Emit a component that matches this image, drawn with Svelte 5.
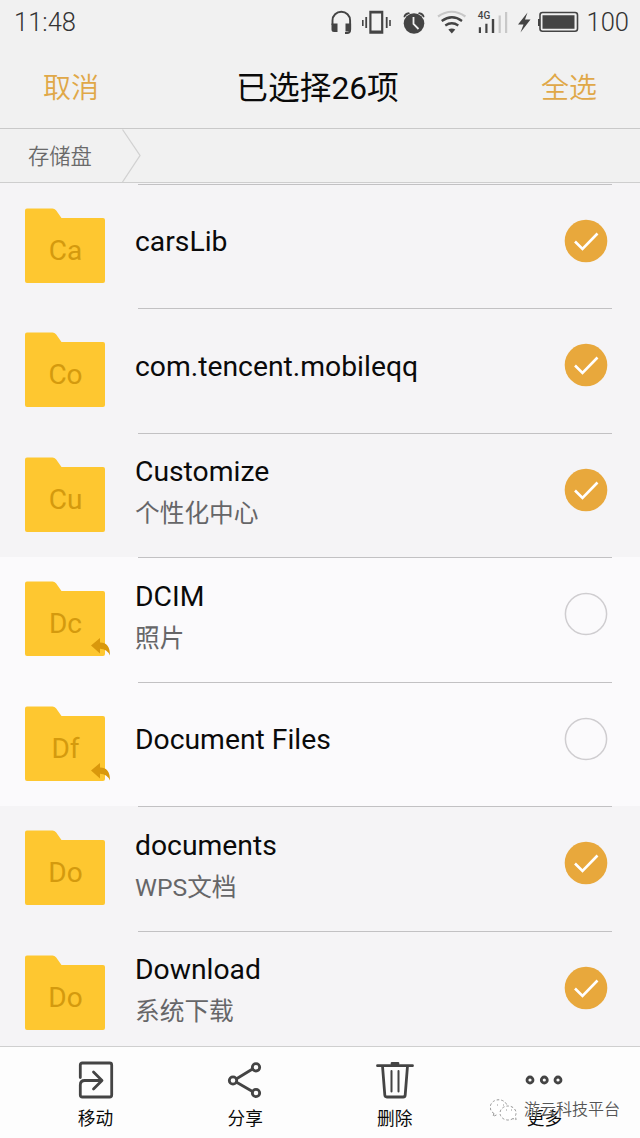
<script lang="ts">
	type Folder = { abbr: string; name: string; note?: string; selected: boolean; linked?: boolean };

	let folders = $state<Folder[]>([
		{ abbr: 'Ca', name: 'carsLib', selected: true },
		{ abbr: 'Co', name: 'com.tencent.mobileqq', selected: true },
		{ abbr: 'Cu', name: 'Customize', note: '个性化中心', selected: true },
		{ abbr: 'Dc', name: 'DCIM', note: '照片', selected: false, linked: true },
		{ abbr: 'Df', name: 'Document Files', selected: false, linked: true },
		{ abbr: 'Do', name: 'documents', note: 'WPS文档', selected: true },
		{ abbr: 'Do', name: 'Download', note: '系统下载', selected: true }
	]);

	// selected folders outside the visible part of the list
	let hiddenSelected = $state(21);
	let total = $derived(hiddenSelected + folders.filter((f) => f.selected).length);

	function setAll(value: boolean) {
		for (const folder of folders) folder.selected = value;
		if (!value) hiddenSelected = 0;
	}
</script>

<div class="screen">
	<div class="status">
		<span class="time">11:48</span>
		<svg class="indicators" width="262" height="30" viewBox="330 7 262 30">
			<path d="M332.500 25v-4.500a8.800 8.800 0 0 1 17.600 0V30q0 3-3 3H345" fill="none" stroke="#444" stroke-width="1.900" />
			<g fill="#444">
				<path d="M331.500 23.500h6v8.500h-3.500a2.500 2.500 0 0 1-2.500-2.500zM345.500 23.500h5.600v6a2 2 0 0 1-2 2h-3.600z" />
				<path d="M369.300 10.700h14v23h-14zM371.500 13.500v17h9.600v-17z" fill-rule="evenodd" />
				<path d="M365.300 17h1.800v11h-1.800zM362 20h1.600v6H362zM385.800 17h1.800v11h-1.800zM389.200 20h1.600v6h-1.600z" />
				<circle cx="414" cy="23.500" r="10.300" />
				<path d="M403.500 17q.3-4 5.500-4.700l1 1.200q-3.500 1-5.500 4zM424.500 17q-.3-4-5.500-4.700l-1 1.200q3.500 1 5.500 4z" />
				<path d="M448.300 29.500q3.500-2 7 0l-3.500 4z" />
				<path d="M478.800 27.300h2.200V33h-2.200zM485.300 23.700h2.200V33h-2.200zM491.800 19h2.400v14h-2.400z" />
				<path d="M527.500 12.500L518 24.500h5.500L520.500 32.500 530.500 19.500h-5.500z" />
				<path d="M542.500 15.300h32v13.500h-32zM538 19h2v7h-2z" />
			</g>
			<path d="M413.500 17v7l5 5" fill="none" stroke="#f1f1f1" stroke-width="1.800" />
			<path d="M438 16.500q13.700-9.500 27.400 0" fill="none" stroke="#c8c8c8" stroke-width="2.200" />
			<path d="M441.700 21q10.200-7.500 20.300 0M445.300 25.500q6.500-4.500 13 0" fill="none" stroke="#444" stroke-width="2.300" />
			<path d="M498.600 15.500h2.200V33h-2.200zM505 12h2.200v21H505z" fill="#c8c8c8" />
			<rect x="540" y="12.500" width="37.500" height="18.800" rx="2.500" fill="none" stroke="#444" stroke-width="1.600" />
			<text x="477.800" y="19" class="network">4G</text>
		</svg>
		<span class="battery">100</span>
	</div>

	<header>
		<button type="button" onclick={() => setAll(false)}>取消</button>
		<h1>已选择{total}项</h1>
		<button type="button" onclick={() => setAll(true)}>全选</button>
	</header>

	<nav>
		<span>存储盘</span>
		<svg width="20" height="53" viewBox="0 0 20 53" fill="none" stroke="#d2d2d2" stroke-width="1.300">
			<path d="M1.500 0.500L19 26.500 1.500 53" />
		</svg>
	</nav>

	<main>
		{#each folders as folder, i (i)}
			<div class="row" class:selected={folder.selected}>
				<div class="divider"></div>
				<div class="item">
					<div class="folder">
						<svg width="88" height="76" viewBox="0 0 88 76">
							<path d="M2 0.500h25.500q2 0 3.500 1.800l5.500 7.700H78q2 0 2 2V73q0 2-2 2H2q-2 0-2-2V2.500q0-2 2-2z" fill="#fec730" />
							<text x="40.500" y="51.500" text-anchor="middle">{folder.abbr}</text>
							{#if folder.linked}
								<path d="M66 64.500l9-7.500v4.500q10 0 10 13-3-6.500-10-6.700v4.700z" fill="#d9980c" />
							{/if}
						</svg>
					</div>
					<div class="label">
						<div class="name">{folder.name}</div>
						{#if folder.note}
							<div class="note">{folder.note}</div>
						{/if}
					</div>
					<button
						type="button"
						class="check"
						aria-label={folder.name}
						onclick={() => (folder.selected = !folder.selected)}
					>
						<svg width="44" height="44" viewBox="0 0 44 44" fill="none">
							{#if folder.selected}
								<circle cx="22" cy="22" r="21.300" fill="#e8a83c" />
								<path d="M11 22.500l7.500 7.500L33.500 14.500" stroke="#fff" stroke-width="2.600" />
							{:else}
								<circle cx="22" cy="22" r="20.600" stroke="#cfcdd0" stroke-width="1.500" />
							{/if}
						</svg>
					</button>
				</div>
			</div>
		{/each}
	</main>

	<footer>
		<button type="button">
			<svg width="40" height="40" viewBox="0 0 40 40">
				<path d="M4.300 17.500V5q0-2 2-2h27.400q2 0 2 2v30q0 2-2 2H6.300q-2 0-2-2V25q0-4.500 4.500-4.500H25.500M17.500 12l8.500 8.500-8.500 8.500" />
			</svg>
			<span>移动</span>
		</button>
		<button type="button">
			<svg width="40" height="40" viewBox="0 0 40 40">
				<path d="M12 18.500l15.500-9.500M12 22.500l15.500 9" />
				<circle cx="8" cy="20.500" r="3.700" />
				<circle cx="31" cy="7.300" r="3.700" />
				<circle cx="31" cy="33" r="3.700" />
			</svg>
			<span>分享</span>
		</button>
		<button type="button">
			<svg width="40" height="40" viewBox="0 0 40 40">
				<path d="M2.500 5.700h35M17 3.500h6M7.500 6l2.300 29q.2 2 2 2h16.400q1.800 0 2-2l2.300-29" />
				<path d="M16.500 11v20.500M23.500 11v20.500" stroke-width="2" />
			</svg>
			<span>删除</span>
		</button>
		<button type="button">
			<svg width="40" height="40" viewBox="0 0 40 40">
				<circle cx="6" cy="20" r="3" />
				<circle cx="20.300" cy="20" r="3" />
				<circle cx="34" cy="20" r="3" />
			</svg>
			<span>更多</span>
		</button>
		<div class="watermark">
			<svg width="28" height="24" viewBox="0 0 28 24" fill="#fff" stroke="#888" stroke-width="0.900" stroke-dasharray="2.500 2">
				<path d="M4 15.500A8.500 7.500 0 1 1 17 7.500M4 15.500l-1 3 4-1.800" />
				<path d="M23 20.500a8 7 0 1 1 2.500-3l.5 4.500z" />
				<path d="M7 7h1M13 7h1M16 12h1M21 12h1" />
			</svg>
			<span>游云科技平台</span>
		</div>
	</footer>
</div>

<style>
	:global(body) {
		margin: 0;
	}

	.screen {
		display: flex;
		flex-direction: column;
		width: 640px;
		height: 1138px;
		overflow: hidden;
		background: #f1f1f1;
		font-family: Roboto, 'Noto Sans CJK SC', sans-serif;
		color: #0a0a0a;
	}

	button {
		border: 0;
		padding: 0;
		background: none;
		font: inherit;
		color: inherit;
	}

	.status {
		display: flex;
		align-items: center;
		justify-content: space-between;
		height: 44px;
		padding: 0 11px 1px 14px;
		font-size: 25.500px;
		font-weight: 330;
		color: #333;
	}

	.indicators {
		margin-left: auto;
		margin-right: -5px;
	}

	.network {
		font: 500 10px Roboto, sans-serif;
		fill: #444;
	}

	header {
		display: flex;
		align-items: center;
		justify-content: space-between;
		height: 83px;
		padding: 0 43px;
		border-bottom: 1px solid #c9c9c9;
	}

	header button {
		margin-top: -2px;
		font-size: 28px;
		font-weight: 350;
		color: #e0a848;
	}

	h1 {
		margin: -4px 0 0;
		padding-right: 5px;
		font-size: 31.700px;
		font-weight: 370;
	}

	nav {
		display: flex;
		align-items: center;
		height: 53px;
		padding-left: 28px;
		border-bottom: 1px solid #cecece;
		font-size: 21.300px;
		font-weight: 350;
		color: #6a6a6a;
	}

	nav span {
		margin-top: -2px;
	}

	nav svg {
		margin-left: 29px;
	}

	main {
		flex: 1;
		min-height: 0;
		overflow: hidden;
		padding-top: 0.800px;
		background: #f5f4f6;
	}

	.row {
		height: 124.500px;
		background: #fbfafc;
	}

	.selected {
		background: #f5f4f6;
	}

	.divider {
		height: 1px;
		margin: 0 28px 0 138px;
		background: #c2c1c3;
	}

	.item {
		display: flex;
		height: 114px;
		padding: 0 32px 0 25px;
		align-items: center;
	}

	.folder {
		width: 110px;
		padding-top: 8px;
	}

	.folder svg,
	.check svg {
		display: block;
	}

	.check {
		margin-top: -2px;
	}

	.folder text {
		font-size: 28px;
		font-weight: 370;
		fill: #d49a0e;
	}

	.label {
		flex: 1;
		padding-top: 1px;
	}

	.name {
		font-size: 28.300px;
		font-weight: 370;
		line-height: 40px;
	}

	.note {
		padding-top: 1px;
		margin-bottom: -5px;
		font-size: 24.700px;
		font-weight: 370;
		line-height: 42px;
		color: #666668;
	}

	footer {
		position: relative;
		display: flex;
		justify-content: space-between;
		height: 91px;
		padding: 0 75px 0 75px;
		border-top: 1px solid #cfcfcf;
		background: #fdfdfd;
	}

	footer button {
		display: flex;
		flex-direction: column;
		align-items: center;
		width: 41px;
		padding-top: 12.500px;
		font-size: 17.700px;
		line-height: 26px;
		white-space: nowrap;
	}

	footer button svg {
		fill: none;
		stroke: #444;
		stroke-width: 2.800;
		stroke-linecap: round;
		stroke-linejoin: round;
	}

	footer button span {
		margin-top: 6px;
	}

	.watermark {
		position: absolute;
		top: 50px;
		right: 20px;
		display: flex;
		align-items: center;
		gap: 6px;
		font-size: 16px;
		font-weight: 350;
		line-height: 26px;
		color: #555;
		text-shadow: -1px -1px 0 #fff;
	}
</style>
